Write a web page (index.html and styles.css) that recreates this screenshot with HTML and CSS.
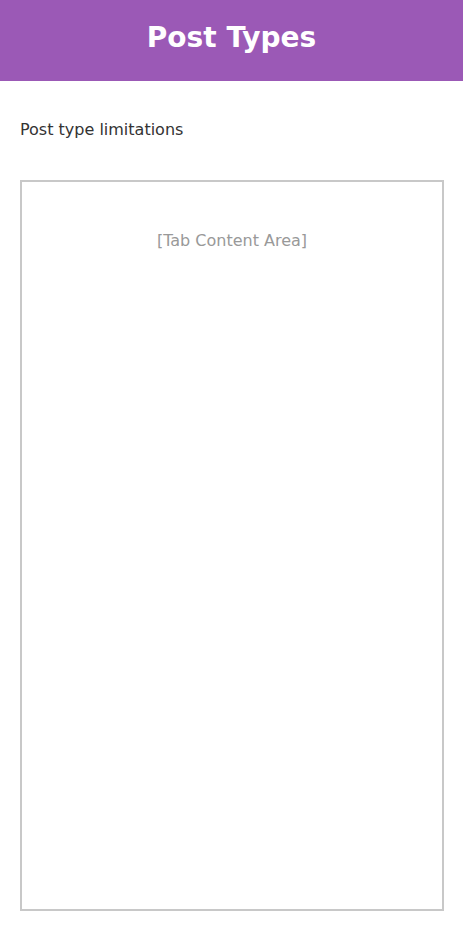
FILE: index.html
```html
<!DOCTYPE html>
<html>
<head>
<meta charset="utf-8">
<link rel="stylesheet" href="styles.css">
</head>
<body>
<header class="header"><h1 class="title">Post Types</h1></header>
<main class="content">
  <p class="label">Post type limitations</p>
  <section class="tab-area">
    <p class="placeholder">[Tab Content Area]</p>
  </section>
</main>
</body>
</html>
```
FILE: styles.css
```css
html, body {
  margin: 0;
  padding: 0;
  background: #fff;
  font-family: "DejaVu Sans", sans-serif;
}
.header {
  background: #9b59b6;
  height: 81px;
  display: flex;
  align-items: center;
  justify-content: center;
}
.title {
  margin: 0;
  color: #fff;
  font-size: 28px;
  font-weight: bold;
  line-height: 1;
  padding-bottom: 6px;
}
.content {
  padding: 40px 19px 19px 20px;
  display: flex;
  flex-direction: column;
}
.label {
  margin: 0;
  font-size: 16px;
  line-height: 18px;
  color: #333;
}
.tab-area {
  margin-top: 41px;
  height: 731px;
  border: 2px solid #c8c8c8;
  padding-top: 50px;
  box-sizing: border-box;
}
.placeholder {
  margin: 0;
  text-align: center;
  font-size: 16px;
  line-height: 18px;
  color: #999;
}
```
